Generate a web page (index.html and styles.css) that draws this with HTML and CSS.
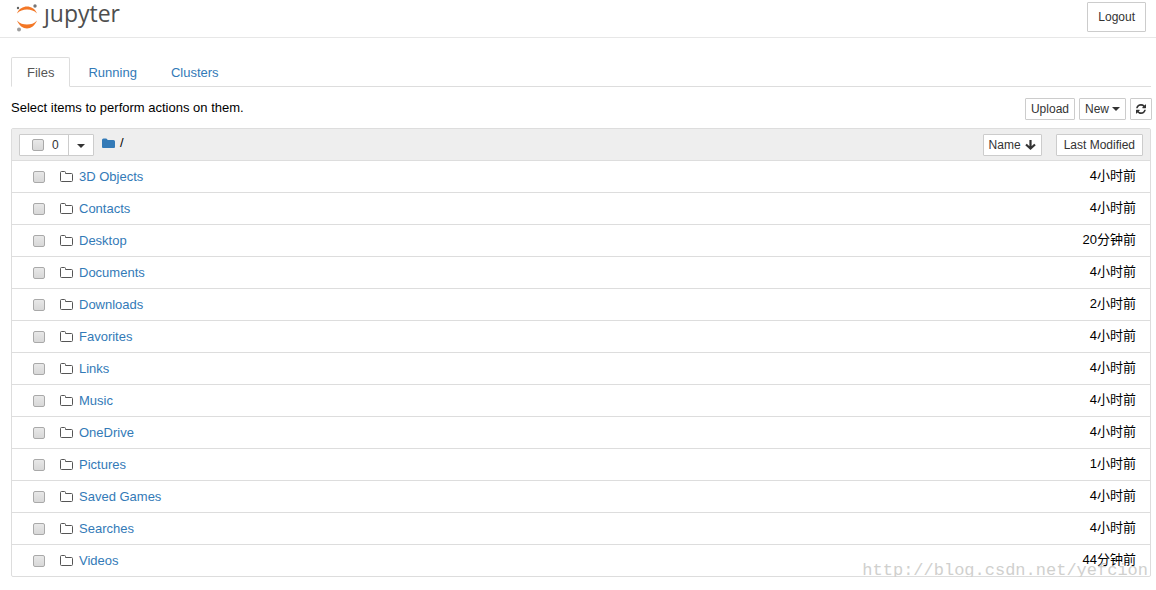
FILE: index.html
```html
<!DOCTYPE html>
<html lang="en">
<head>
    <meta charset="UTF-8">
    <meta name="viewport" content="width=device-width, initial-scale=1.0">
    <title>Home</title>
    <link rel="stylesheet" href="styles.css">
</head>
<body>
    <svg class="symbols" aria-hidden="true">
        <symbol id="folder-open" viewBox="0 0 13 11">
            <path d="M.5 9.500v-8q0-1 1-1h3q1 0 1 1v1h6q1 0 1 1v6q0 1-1 1h-10q-1 0-1-1z" fill="none" stroke="#555"/>
        </symbol>
    </svg>

    <header class="header">
        <a class="logo" href="#" aria-label="jupyter">
            <svg width="24" height="30" viewBox="0 0 24 30">
                <path d="M2 11.500C4 6.500 8 4.500 12 4.500s8 2 10 7c-3-3-6-4-10-4s-7 1-10 4z" fill="#f37726"/>
                <path d="M2 18.500c3 3 6 4 10 4s7-1 10-4c-2 5-6 8-10 8s-8-3-10-8z" fill="#f37726"/>
                <circle cx="20" cy="4" r="1.700" fill="#767677"/>
                <circle cx="3" cy="6" r="1.200" fill="#616262"/>
                <circle cx="4" cy="27.500" r="2" fill="#9e9e9e"/>
            </svg>
            <span>ȷupyter</span>
        </a>
        <button type="button" class="btn btn-logout">Logout</button>
    </header>

    <main class="container">
        <nav class="tabs">
            <a class="active" href="#files">Files</a>
            <a href="#running">Running</a>
            <a href="#clusters">Clusters</a>
        </nav>

        <div class="toolbar">
            <span>Select items to perform actions on them.</span>
            <div class="toolbar-buttons">
                <button type="button" class="btn">Upload</button>
                <button type="button" class="btn btn-new">New <span class="caret"></span></button>
                <button type="button" class="btn btn-refresh" aria-label="Refresh">
                    <svg width="10" height="10" viewBox="0 0 1536 1536"><path fill="#333" d="M1511 928q0 5-1 7-64 268-268 434.500T764 1536q-146 0-282.500-55T238 1324l-129 129q-19 19-45 19t-45-19-19-45V960q0-26 19-45t45-19h448q26 0 45 19t19 45-19 45l-137 137q71 66 161 102t187 36q134 0 250-65t186-179q11-17 53-117 8-23 30-23h192q13 0 22.500 9.500t9.500 22.500zm25-800v448q0 26-19 45t-45 19h-448q-26 0-45-19t-19-45 19-45l138-138Q969 256 768 256q-134 0-250 65T332 500q-11 17-53 117-8 23-30 23H50q-13 0-22.500-9.500T18 608v-7q65-268 270-434.500T768 0q146 0 284 55.500T1297 212l130-129q19-19 45-19t45 19 19 45z"/></svg>
                </button>
            </div>
        </div>

        <table class="files">
            <thead>
                <tr>
                    <th>
                        <div class="head-left">
                            <div class="select-group">
                                <label class="select-all"><input type="checkbox"> <span>0</span></label>
                                <button type="button" aria-label="Select by type"><span class="caret"></span></button>
                            </div>
                            <div class="breadcrumb">
                                <a href="#" aria-label="Home folder">
                                    <svg width="13" height="11" viewBox="0 0 13 11"><path d="M0 9V2q0-1.500 1.500-1.500h2.500q1.500 0 1.500 1.500h6q1.500 0 1.500 1.500v5.500q0 1-1 1H1q-1 0-1-1z" fill="#337ab7"/></svg>
                                </a>
                                <span>/</span>
                            </div>
                        </div>
                    </th>
                    <th>
                        <div class="head-right">
                            <button type="button" class="btn">Name
                                <svg width="11" height="10" viewBox="0 0 11 10"><path d="M5.500 0v8M1 4.500l4.500 4 4.500-4" fill="none" stroke="#333" stroke-width="2.200"/></svg>
                            </button>
                            <button type="button" class="btn btn-modified">Last Modified</button>
                        </div>
                    </th>
                </tr>
            </thead>
            <tbody>
                <tr>
                    <td><div class="item"><input type="checkbox" aria-label="3D Objects"><svg width="13" height="11"><use href="#folder-open"/></svg><a href="#">3D Objects</a></div></td>
                    <td class="time">4小时前</td>
                </tr>
                <tr>
                    <td><div class="item"><input type="checkbox" aria-label="Contacts"><svg width="13" height="11"><use href="#folder-open"/></svg><a href="#">Contacts</a></div></td>
                    <td class="time">4小时前</td>
                </tr>
                <tr>
                    <td><div class="item"><input type="checkbox" aria-label="Desktop"><svg width="13" height="11"><use href="#folder-open"/></svg><a href="#">Desktop</a></div></td>
                    <td class="time">20分钟前</td>
                </tr>
                <tr>
                    <td><div class="item"><input type="checkbox" aria-label="Documents"><svg width="13" height="11"><use href="#folder-open"/></svg><a href="#">Documents</a></div></td>
                    <td class="time">4小时前</td>
                </tr>
                <tr>
                    <td><div class="item"><input type="checkbox" aria-label="Downloads"><svg width="13" height="11"><use href="#folder-open"/></svg><a href="#">Downloads</a></div></td>
                    <td class="time">2小时前</td>
                </tr>
                <tr>
                    <td><div class="item"><input type="checkbox" aria-label="Favorites"><svg width="13" height="11"><use href="#folder-open"/></svg><a href="#">Favorites</a></div></td>
                    <td class="time">4小时前</td>
                </tr>
                <tr>
                    <td><div class="item"><input type="checkbox" aria-label="Links"><svg width="13" height="11"><use href="#folder-open"/></svg><a href="#">Links</a></div></td>
                    <td class="time">4小时前</td>
                </tr>
                <tr>
                    <td><div class="item"><input type="checkbox" aria-label="Music"><svg width="13" height="11"><use href="#folder-open"/></svg><a href="#">Music</a></div></td>
                    <td class="time">4小时前</td>
                </tr>
                <tr>
                    <td><div class="item"><input type="checkbox" aria-label="OneDrive"><svg width="13" height="11"><use href="#folder-open"/></svg><a href="#">OneDrive</a></div></td>
                    <td class="time">4小时前</td>
                </tr>
                <tr>
                    <td><div class="item"><input type="checkbox" aria-label="Pictures"><svg width="13" height="11"><use href="#folder-open"/></svg><a href="#">Pictures</a></div></td>
                    <td class="time">1小时前</td>
                </tr>
                <tr>
                    <td><div class="item"><input type="checkbox" aria-label="Saved Games"><svg width="13" height="11"><use href="#folder-open"/></svg><a href="#">Saved Games</a></div></td>
                    <td class="time">4小时前</td>
                </tr>
                <tr>
                    <td><div class="item"><input type="checkbox" aria-label="Searches"><svg width="13" height="11"><use href="#folder-open"/></svg><a href="#">Searches</a></div></td>
                    <td class="time">4小时前</td>
                </tr>
                <tr>
                    <td><div class="item"><input type="checkbox" aria-label="Videos"><svg width="13" height="11"><use href="#folder-open"/></svg><a href="#">Videos</a></div></td>
                    <td class="time">44分钟前</td>
                </tr>
            </tbody>
        </table>
        <span class="watermark">http://blog.csdn.net/yefcion</span>
    </main>
</body>
</html>
```
FILE: styles.css
```css
* {
    box-sizing: border-box;
}
body {
    font-family: "Liberation Sans", "Noto Sans CJK SC", sans-serif;
    font-size: 13px;
    line-height: 20px;
    color: #000;
    background-color: #fff;
    margin: 0;
}
a {
    color: #337ab7;
    text-decoration: none;
}
a:hover {
    text-decoration: underline;
}
svg {
    display: block;
    flex: none;
}
.symbols {
    display: none;
}
.header {
    display: flex;
    justify-content: space-between;
    align-items: flex-start;
    height: 38px;
    padding: 2px 10px 0 15px;
    border-bottom: 1px solid #e7e7e7;
}
.logo {
    display: flex;
    gap: 5px;
    color: #4e4e4e;
    font-family: "Open Sans", "Noto Sans", sans-serif;
    font-size: 23px;
    line-height: 22px;
}
.logo:hover {
    text-decoration: none;
}
.btn {
    display: flex;
    align-items: center;
    gap: 4px;
    height: 22px;
    padding: 0 5px;
    font-family: inherit;
    font-size: 12px;
    color: #333;
    background-color: #fff;
    border: 1px solid #ccc;
    border-radius: 1px;
    white-space: nowrap;
    cursor: pointer;
}
.btn:hover {
    background-color: #e6e6e6;
}
.btn-logout {
    height: 30px;
    padding: 0 10px;
}
.btn-new {
    gap: 3px;
}
.btn-modified {
    padding: 0 7px;
}
.caret {
    border-top: 4px solid #333;
    border-left: 4px solid transparent;
    border-right: 4px solid transparent;
}
.container {
    position: relative;
    padding: 19px 5px 0 11px;
}
.tabs {
    display: flex;
    gap: 2px;
    border-bottom: 1px solid #ddd;
}
.tabs a {
    padding: 5px 15px 3px;
    margin-bottom: -1px;
    border: 1px solid transparent;
    border-radius: 2px 2px 0 0;
}
.tabs .active {
    color: #555;
    background-color: #fff;
    border-color: #ddd;
    border-bottom-color: #fff;
}
.toolbar {
    display: flex;
    justify-content: space-between;
    padding: 11px 0 8px;
    margin-right: -1px;
}
.toolbar-buttons {
    display: flex;
    gap: 4px;
}
.files {
    width: 100%;
    border: 1px solid #ddd;
    border-radius: 2px;
    border-spacing: 0;
}
.files th,
.files td {
    height: 32px;
    padding: 0;
    font-weight: normal;
    border-bottom: 1px solid #ddd;
}
.files th {
    background-color: #eee;
}
.files tbody tr:last-child td {
    height: 31px;
    border-bottom: none;
}
.head-left {
    display: flex;
    align-items: center;
    padding-left: 7px;
}
.select-group {
    display: flex;
    height: 22px;
    background-color: #fff;
    border: 1px solid #ccc;
    border-radius: 1px;
    font-size: 12px;
    color: #333;
}
.select-all {
    display: flex;
    align-items: center;
    gap: 8px;
    width: 48px;
    padding-left: 12px;
}
.select-group button {
    display: flex;
    align-items: center;
    justify-content: center;
    width: 25px;
    padding: 2px 0 0;
    background: none;
    border: none;
    border-left: 1px solid #ccc;
}
.breadcrumb {
    display: flex;
    align-items: center;
    gap: 5px;
    padding: 0 0 3px 8px;
}
.head-right {
    display: flex;
    justify-content: flex-end;
    gap: 14px;
    padding-right: 7px;
}
input[type="checkbox"] {
    appearance: none;
    width: 12px;
    height: 12px;
    margin: 0;
    border: 1px solid #a9a9a9;
    border-radius: 2px;
    background: linear-gradient(#e8e8e8, #d8d8d8);
}
input[type="checkbox"]:checked {
    background: #337ab7;
}
.item {
    display: flex;
    align-items: center;
    padding-left: 21px;
}
.item svg {
    margin: 0 6px 0 15px;
}
.files .time {
    padding: 0 14px 2px 0;
    text-align: right;
}
.watermark {
    position: absolute;
    right: 8px;
    bottom: -4px;
    font-family: "Liberation Mono", monospace;
    font-size: 17px;
    color: #d0d0ce;
    pointer-events: none;
}
```
